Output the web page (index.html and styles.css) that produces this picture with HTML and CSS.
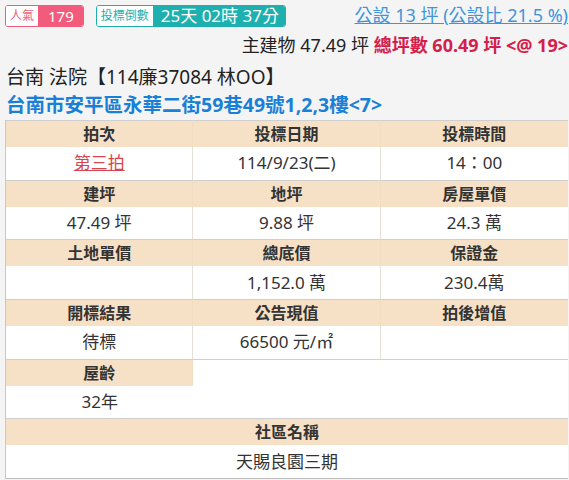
FILE: index.html
```html
<!DOCTYPE html>
<html lang="zh-Hant">
<head>
<meta charset="utf-8">
<link rel="stylesheet" href="styles.css">
</head>
<body>
<div class="page">
  <div class="top">
    <div class="badges">
      <span class="badge pink"><span class="lbl">人氣</span><span class="val">179</span></span>
      <span class="badge teal"><span class="lbl">投標倒數</span><span class="val">25天 02時 37分</span></span>
    </div>
    <a class="pub" href="#">公設 13 坪 (公設比 21.5 %)</a>
  </div>
  <div class="area">主建物 47.49 坪 <b class="total">總坪數 60.49 坪 &lt;@ 19&gt;</b></div>
  <div class="case">台南 法院【114廉37084 林OO】</div>
  <div class="addr">台南市安平區永華二街59巷49號1,2,3樓&lt;7&gt;</div>
  <table class="info">
    <tr class="hr"><th>拍次</th><th>投標日期</th><th>投標時間</th></tr>
    <tr class="dr"><td><a class="round" href="#">第三拍</a></td><td>114/9/23(二)</td><td>14：00</td></tr>
    <tr class="hr"><th>建坪</th><th>地坪</th><th>房屋單價</th></tr>
    <tr class="dr"><td>47.49 坪</td><td>9.88 坪</td><td>24.3 萬</td></tr>
    <tr class="hr"><th>土地單價</th><th>總底價</th><th>保證金</th></tr>
    <tr class="dr"><td></td><td>1,152.0 萬</td><td>230.4萬</td></tr>
    <tr class="hr"><th>開標結果</th><th>公告現值</th><th>拍後增值</th></tr>
    <tr class="dr"><td>待標</td><td>66500 元/㎡</td><td></td></tr>
    <tr class="hr"><th>屋齡</th><td class="blank" rowspan="2" colspan="2"></td></tr>
    <tr class="dr"><td>32年</td></tr>
    <tr class="hr"><th colspan="3">社區名稱</th></tr>
    <tr class="dr"><td colspan="3">天賜良園三期</td></tr>
  </table>
</div>
</body>
</html>
```

FILE: styles.css
```css
html, body {
  margin: 0;
  padding: 0;
  background: #f4f4f4;
}
body {
  font-family: "Noto Sans", "Noto Sans CJK TC", sans-serif;
  color: #333;
}
.page {
  padding: 5px 1px 0 5px;
}
.top {
  display: flex;
  justify-content: space-between;
  align-items: flex-start;
  height: 22px;
}
.badges {
  display: flex;
  gap: 12px;
}
.badge {
  display: flex;
  height: 20px;
  border: 1px solid;
  border-radius: 3px;
  overflow: hidden;
  background: #fff;
}
.badge .lbl {
  font-size: 12px;
  line-height: 20px;
  padding: 0 4px;
  background: #fff;
}
.badge .val {
  color: #fff;
  line-height: 20px;
}
.pink { border-color: #f25b7b; }
.pink .lbl { color: #f25b7b; }
.pink .val { background: #f25b7b; font-size: 15px; padding: 0 9px 0 10px; }
.teal { border-color: #1eb0ae; }
.teal .lbl { color: #1eb0ae; }
.teal .val { background: #1eb0ae; font-size: 17px; padding: 0 6px 0 8px; }
.pub {
  color: #3f94dc;
  font-size: 18px;
  line-height: 24px;
  margin-top: -2px;
  text-decoration: underline;
}
.area {
  text-align: right;
  font-size: 18px;
  line-height: 24px;
  margin-top: 6px;
  color: #222;
}
.total {
  color: #d3204a;
  font-weight: bold;
}
.case {
  font-size: 19px;
  line-height: 24px;
  margin-top: 8px;
  padding-left: 1px;
  color: #222;
}
.addr {
  font-size: 19.5px;
  line-height: 24px;
  margin-top: 4px;
  padding-left: 1px;
  color: #1a7fd6;
  font-weight: bold;
}
.info {
  width: 100%;
  margin-top: 3px;
  border-collapse: separate;
  border-spacing: 0;
  border-left: 1px solid #c8c8c8;
  border-bottom: 1px solid #bdbdbd;
  table-layout: fixed;
  background: #fff;
  font-size: 17px;
}
.info th, .info td {
  padding: 0;
  text-align: center;
  border-right: 1px solid #e4dfd7;
}
.info tr > :last-child { border-right: none; }
.info .blank { border-right: none; border-top: 1px solid #cfcfcf; }
.info th {
  background: #f6e0c6;
  height: 26px;
  line-height: 26px;
  font-size: 16px;
  font-weight: bold;
  color: #333;
  border-top: 1px solid #cfcfcf;
  border-right-color: #f1dcc4;
}
.info td {
  height: 32.7px;
  line-height: 32px;
  color: #333;
}
.round {
  color: #d9454f;
  text-decoration: underline;
}
```
